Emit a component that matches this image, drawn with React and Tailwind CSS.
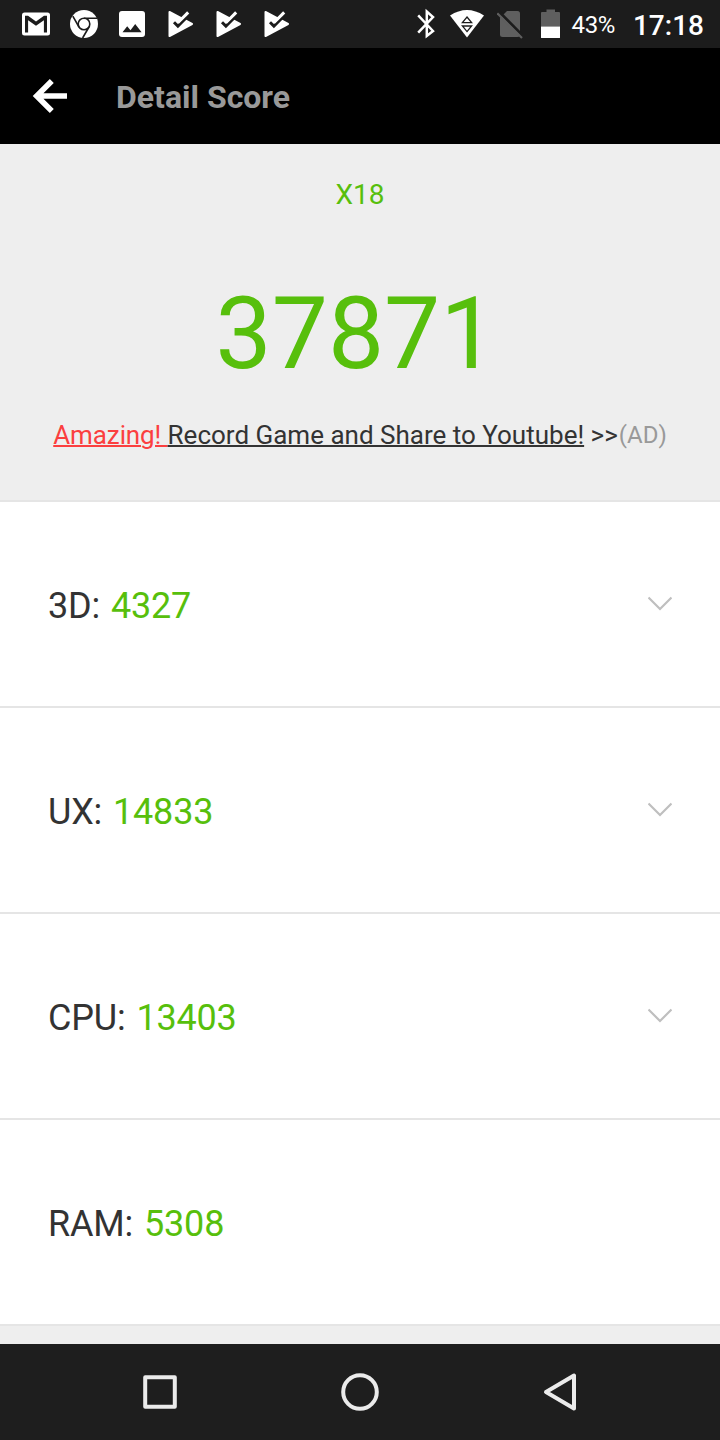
const SCORES = [
  { name: '3D', value: 4327, expandable: true },
  { name: 'UX', value: 14833, expandable: true },
  { name: 'CPU', value: 13403, expandable: true },
  { name: 'RAM', value: 5308, expandable: false },
]

function GmailIcon() {
  return (
    <svg width="48" height="48">
      <rect x="10" y="12.5" width="28" height="23" rx="2.5" fill="#fff" />
      <path d="M13 32.5V15.8H16L24 21.4L32 15.8H35V32.5H31.9V20.2L24 25.8L16.1 20.2V32.5Z" fill="#1c1c1c" />
    </svg>
  )
}

function ChromeIcon() {
  return (
    <svg width="48" height="48">
      <circle cx="24" cy="24" r="14" fill="#fff" />
      <g fill="none" stroke="#1c1c1c" strokeWidth="1.6">
        <circle cx="24" cy="24" r="5.8" />
        <path d="M24 18.2H37M19 27L12.8 16.2M29 27L22.6 38" />
      </g>
    </svg>
  )
}

function ImageIcon() {
  return (
    <svg width="48" height="48">
      <rect x="11" y="11" width="26" height="26" rx="3" fill="#fff" />
      <path d="M14.5 32.3L19.2 26.2L22.5 30.2L27.2 24L33.6 32.3Z" fill="#1c1c1c" />
    </svg>
  )
}

function PlayCheckIcon() {
  return (
    <svg width="48" height="48">
      <path d="M13.5 12L36 24L13.5 36Z" fill="#fff" stroke="#fff" strokeWidth="2" strokeLinejoin="round" />
      <path d="M18 22.2L21.9 26.1L32 16" fill="none" stroke="#1c1c1c" strokeWidth="2.9" />
      <path d="M21.8 22.8L32.2 12.4" stroke="#fff" strokeWidth="3" />
    </svg>
  )
}

function BluetoothIcon() {
  return (
    <svg width="20" height="48" fill="none" stroke="#fff" strokeWidth="2.5">
      <path d="M2.2 15.3L17 31L10.8 36V11.5L17 17L2.2 32.7" />
    </svg>
  )
}

function WifiIcon() {
  return (
    <svg width="36" height="48">
      <path d="M1 15.5Q18 4.5 35 15.5L18 37.5Z" fill="#fff" />
      <path d="M18 17L22.6 22.6H13.4ZM18 31.6L22.6 26H13.4Z" fill="#fff" stroke="#1c1c1c" strokeWidth="1.3" />
    </svg>
  )
}

function NoSimIcon() {
  return (
    <svg width="28" height="48">
      <path d="M10 11H20.5Q23 11 23 13.5V34.5Q23 37 20.5 37H5.5Q3 37 3 34.5V18Z" fill="#5f5f5f" />
      <path d="M2 11.7L27 37" stroke="#1c1c1c" strokeWidth="3" />
      <path d="M0.3 13.3L25 38" stroke="#5f5f5f" strokeWidth="2.2" />
    </svg>
  )
}

function BatteryIcon() {
  return (
    <svg width="20" height="48">
      <path d="M1 12H5.5V9.5H14V12H18Q19 12 19 13V26.5H0V13Q0 12 1 12Z" fill="#5f5f5f" />
      <path d="M0 26.5H19V37.5Q19 38 18.5 38H0.5Q0 38 0 37.5Z" fill="#fff" />
    </svg>
  )
}

function StatusBar() {
  return (
    <div className="flex h-12 items-center justify-between bg-[#1c1c1c] pr-4 pl-3 text-white">
      <div className="flex">
        <GmailIcon />
        <ChromeIcon />
        <ImageIcon />
        <PlayCheckIcon />
        <PlayCheckIcon />
        <PlayCheckIcon />
      </div>
      <div className="flex h-12 items-center">
        <BluetoothIcon />
        <div className="ml-[13px]"><WifiIcon /></div>
        <div className="ml-3"><NoSimIcon /></div>
        <div className="ml-4"><BatteryIcon /></div>
        <span className="ml-[11px] pt-px text-2xl leading-12 tracking-[-0.4px]">43%</span>
        <span className="ml-[18px] pt-[3px] text-[28px] leading-12 font-medium">17:18</span>
      </div>
    </div>
  )
}

function ScoreRow({ name, value, expandable }) {
  return (
    <div className="flex h-[206px] items-center justify-between border-b-2 border-[#e5e5e5] bg-white px-12 text-4xl">
      <div className="flex gap-[11px] pt-1 tracking-[-0.2px]">
        <span className="text-[#333]">{name}:</span>
        <span className="text-[#57bf0c]">{value}</span>
      </div>
      {expandable && (
        <svg width="24" height="16" fill="none" stroke="#bfbfbf" strokeWidth="2.2">
          <path d="M0.5 1.5L12 13L23.5 1.5" />
        </svg>
      )}
    </div>
  )
}

function NavBar() {
  return (
    <div className="flex h-24 items-center justify-center gap-[152px] bg-[#1e1e1e]">
      <svg width="48" height="48" fill="none" stroke="#ebebeb" strokeWidth="4" strokeLinejoin="round">
        <rect x="9.2" y="9.2" width="29.6" height="29.6" />
      </svg>
      <svg width="48" height="48" fill="none" stroke="#ebebeb" strokeWidth="4">
        <circle cx="24" cy="24" r="16.8" />
      </svg>
      <svg width="48" height="48" fill="none" stroke="#ebebeb" strokeWidth="4" strokeLinejoin="round">
        <path d="M38 7.5V40.5L10 24Z" />
      </svg>
    </div>
  )
}

export default function App() {
  return (
    <div className="flex h-[1440px] w-[720px] flex-col overflow-hidden bg-[#eee] font-[Roboto,sans-serif]">
      <StatusBar />
      <header className="flex h-24 items-center bg-black pl-8">
        <svg width="36" height="36" fill="none" stroke="#fff" strokeWidth="5.6">
          <path d="M35 18H5M19.8 2.9L4.7 18L19.8 33.1" />
        </svg>
        <h1 className="ml-12 pt-0.5 text-[32px] font-bold text-[#999]">Detail Score</h1>
      </header>

      <section className="flex h-[358px] flex-col items-center border-b-2 border-[#e5e5e5]">
        <p className="mt-[34px] text-[28px] leading-[34px] text-[#57bf0c]">X18</p>
        <p className="mt-[63px] pr-2 text-[100px] leading-[118px] text-[#57bf0c]">37871</p>
        <p className="mt-[26px] text-[26px] leading-8 whitespace-nowrap text-[#333]">
          <span className="text-[#fb3f3f] underline decoration-2 tracking-[-0.1px]">Amazing! </span>
          <span className="underline decoration-2">Record Game and Share to Youtube!</span>
          {' >>'}
          <span className="ml-px inline-block -translate-y-px text-2xl leading-8 text-[#999]">(AD)</span>
        </p>
      </section>

      <main>
        {SCORES.map((score) => (
          <ScoreRow key={score.name} {...score} />
        ))}
      </main>

      <div className="mt-auto">
        <NavBar />
      </div>
    </div>
  )
}
